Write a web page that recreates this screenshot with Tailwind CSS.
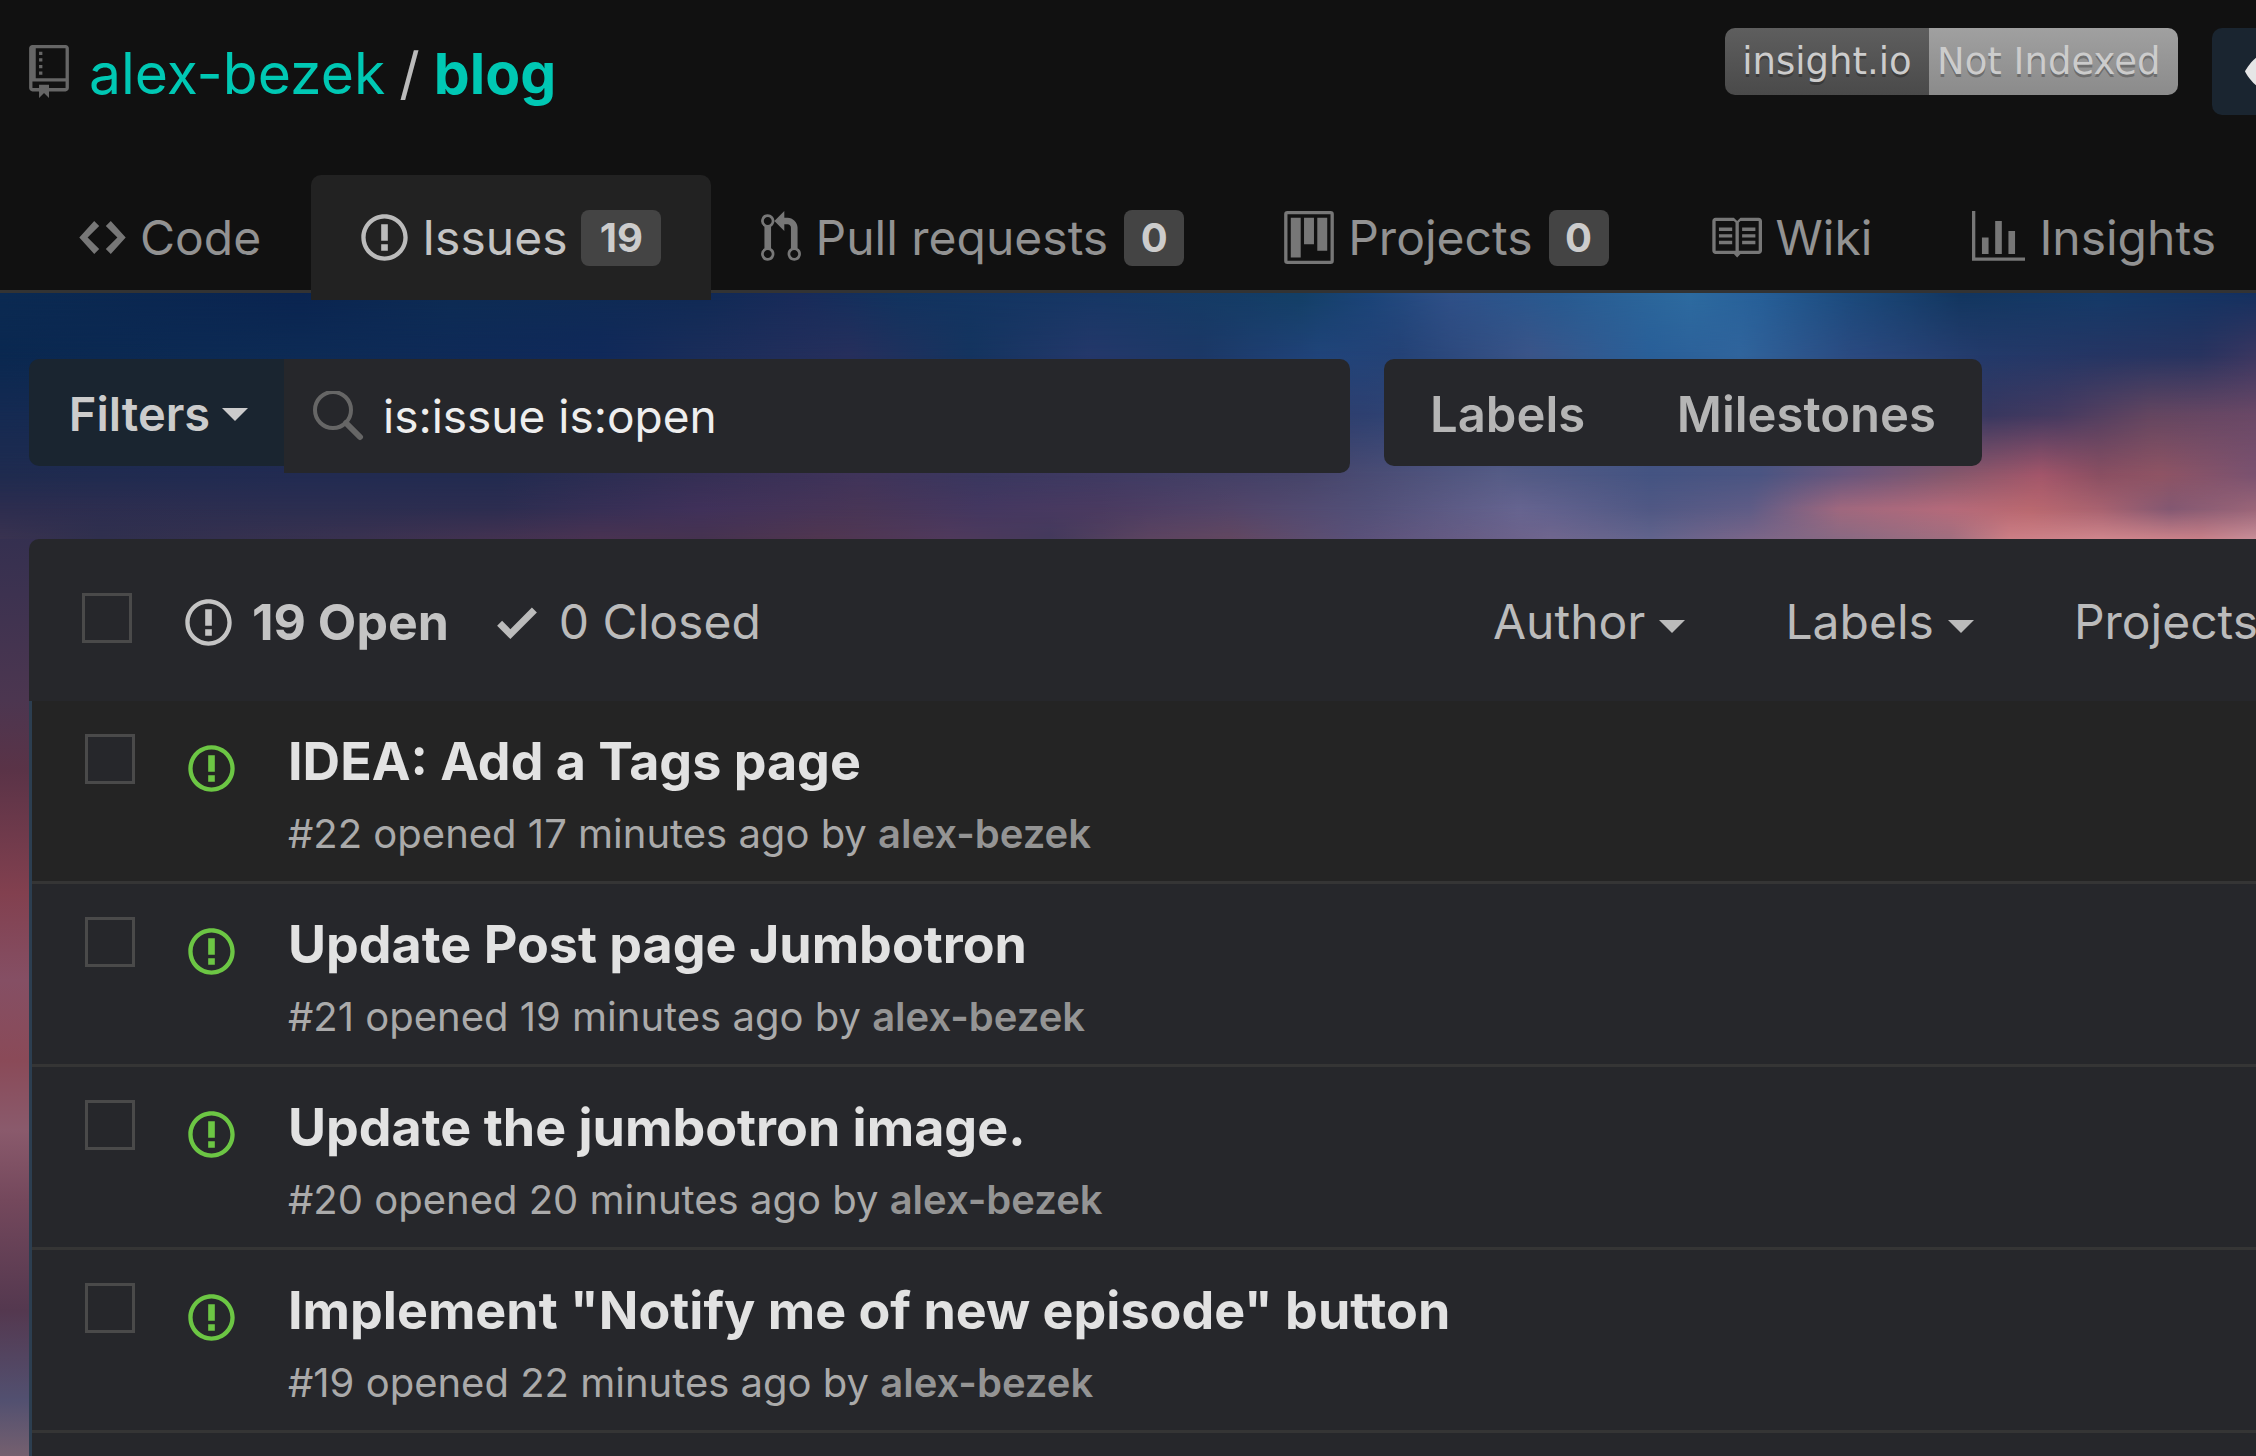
<!DOCTYPE html>
<html lang="en">
<head>
<meta charset="utf-8">
<meta name="viewport" content="width=device-width, initial-scale=1">
<title>Issues · alex-bezek/blog</title>
<script src="https://cdn.jsdelivr.net/npm/@tailwindcss/browser@4"></script>
</head>
<body class="min-h-screen overflow-x-hidden bg-[#111] font-['Inter',sans-serif] text-[#bbb]">

<!-- icon sprite -->
<svg class="hidden" aria-hidden="true">
  <symbol id="repo" viewBox="0 0 12 16"><path d="M4 9H3V8h1v1zm0-3H3v1h1V6zm0-2H3v1h1V4zm0-2H3v1h1V2zm8-1v12c0 .55-.45 1-1 1H6v2l-1.500-1.500L3 16v-2H1c-.55 0-1-.45-1-1V1c0-.55.45-1 1-1h10c.55 0 1 .45 1 1zm-1 10H1v2h2v-1h3v1h5v-2zm0-10H2v9h9V1z"/></symbol>
  <symbol id="code" viewBox="0 0 14 16"><path d="M9.500 3L8 4.500 11.500 8 8 11.500 9.500 13 14 8 9.500 3zm-5 0L0 8l4.500 5L6 11.500 2.500 8 6 4.500 4.500 3z"/></symbol>
  <symbol id="issue" viewBox="0 0 14 16"><path d="M7 2.3c3.14 0 5.7 2.56 5.7 5.7s-2.56 5.7-5.7 5.7A5.71 5.71 0 0 1 1.3 8c0-3.14 2.56-5.7 5.7-5.7zM7 1C3.14 1 0 4.14 0 8s3.14 7 7 7 7-3.14 7-7-3.14-7-7-7zm1 3H6v5h2V4zm0 6H6v2h2v-2z"/></symbol>
  <symbol id="pull" viewBox="0 0 12 16"><path d="M11 11.28V5c-.03-.78-.34-1.47-.94-2.06C9.46 2.35 8.78 2.03 8 2H7V0L4 3l3 3V4h1c.27.02.48.11.69.31.21.2.3.42.31.69v6.28A1.993 1.993 0 0 0 10 15a1.993 1.993 0 0 0 1-3.72zm-1 2.92c-.66 0-1.2-.55-1.2-1.2 0-.65.55-1.2 1.2-1.2.65 0 1.2.55 1.2 1.2 0 .65-.55 1.2-1.2 1.2zM4 3c0-1.11-.89-2-2-2a1.993 1.993 0 0 0-1 3.72v6.56A1.993 1.993 0 0 0 2 15a1.993 1.993 0 0 0 1-3.72V4.72c.59-.34 1-.98 1-1.72zm-.8 10c0 .66-.55 1.2-1.2 1.2-.65 0-1.2-.55-1.2-1.2 0-.65.55-1.2 1.2-1.2.65 0 1.2.55 1.2 1.2zM2 4.2C1.34 4.2.8 3.65.8 3c0-.65.55-1.2 1.2-1.2.65 0 1.2.55 1.2 1.2 0 .65-.55 1.2-1.2 1.2z"/></symbol>
  <symbol id="project" viewBox="0 0 15 16"><path fill-rule="evenodd" d="M10 12h3V2h-3v10zm-4-2h3V2H6v8zm-4 4h3V2H2v12zm-1 1h13V1H1v14zM14 0H1a1 1 0 0 0-1 1v14a1 1 0 0 0 1 1h13a1 1 0 0 0 1-1V1a1 1 0 0 0-1-1z"/></symbol>
  <symbol id="book" viewBox="0 0 16 16"><path d="M3 5h4v1H3V5zm0 3h4V7H3v1zm0 2h4V9H3v1zm11-5h-4v1h4V5zm0 2h-4v1h4V7zm0 2h-4v1h4V9zm2-6v9c0 .55-.45 1-1 1H9.5l-1 1-1-1H2c-.55 0-1-.45-1-1V3c0-.55.45-1 1-1h5.5l1 1 1-1H15c.55 0 1 .45 1 1zm-8 .5L7.5 3H2v9h6V3.5zm7-.5H9.5l-.5.5V12h6V3z"/></symbol>
  <symbol id="graph" viewBox="0 0 16 16"><path d="M16 14v1H0V0h1v14h15zM5 13H3V8h2v5zm4 0H7V3h2v10zm4 0h-2V6h2v7z"/></symbol>
  <symbol id="check" viewBox="0 0 12 16"><path d="M12 5l-8 8-4-4 1.500-1.500L4 10l6.500-6.500L12 5z"/></symbol>
  <symbol id="eye" viewBox="0 0 16 16"><path d="M8.060 2C3 2 0 8 0 8s3 6 8.060 6C13 14 16 8 16 8s-3-6-7.940-6zM8 12c-2.200 0-4-1.780-4-4 0-2.200 1.800-4 4-4 2.220 0 4 1.800 4 4 0 2.220-1.780 4-4 4zm2-4c0 1.110-.89 2-2 2-1.110 0-2-.89-2-2 0-1.110.89-2 2-2 1.110 0 2 .89 2 2z"/></symbol>
  <symbol id="caret" viewBox="0 0 26 13"><path d="M0 0h26L13 13z"/></symbol>
</svg>

<header class="relative z-10 border-b-[3px] border-[#333] bg-[#111] pt-7">
  <div class="flex h-[87px] items-center pl-[29px]">
    <svg class="mr-5 h-[53px] w-10 fill-[#666]" aria-hidden="true"><use href="#repo"/></svg>
    <h1 class="flex items-center gap-[14px] pt-1 text-[57px] leading-[72px] whitespace-nowrap">
      <a href="#" class="text-[#00c8b4]">alex-bezek</a>
      <span>/</span>
      <a href="#" class="font-bold text-[#00c8b4]">blog</a>
    </h1>
    <a href="#" class="mr-[34px] ml-auto flex h-[67px] self-start overflow-hidden rounded-[10px] font-['DejaVu_Sans',sans-serif] text-[37px] leading-[67px] whitespace-nowrap text-[#ccc] [text-shadow:0_3px_0_rgb(0_0_0/0.25)]">
      <span class="w-[204px] bg-linear-to-b from-[#5e5e5e] to-[#4a4a4a] text-center">insight.io</span>
      <span class="w-[249px] bg-linear-to-b from-[#a0a0a0] to-[#8b8b8b] pl-2">Not Indexed</span>
    </a>
    <button type="button" aria-label="Watch" class="flex h-[87px] w-11 items-center overflow-hidden rounded-l-[10px] bg-[#1a2530] pl-[33px]">
      <svg class="h-[53px] w-[53px] shrink-0 fill-[#e6e6e6]" aria-hidden="true"><use href="#eye"/></svg>
    </button>
  </div>

  <nav aria-label="Repository" class="mt-[60px] -mb-[10px] ml-[29px] flex text-[48px] whitespace-nowrap text-[#929292] *:flex *:h-[125px] *:items-center *:px-[50px]">
    <a href="#"><svg class="mr-[14px] h-[53px] w-[47px] fill-[#777]" aria-hidden="true"><use href="#code"/></svg>Code</a>
    <a href="#" aria-current="page" class="rounded-t-[10px] bg-[#222] text-[#c4c4c4]"><svg class="mr-[14px] h-[53px] w-[47px] fill-[#bbb]" aria-hidden="true"><use href="#issue"/></svg>Issues<span class="ml-[14px] w-20 rounded-lg bg-[#444] text-center text-[40px] leading-[56px] font-bold text-[#ccc]">19</span></a>
    <a href="#"><svg class="mr-[14px] h-[53px] w-10 fill-[#777]" aria-hidden="true"><use href="#pull"/></svg>Pull requests<span class="ml-4 w-[60px] rounded-lg bg-[#444] text-center text-[40px] leading-[56px] font-bold text-[#ccc]">0</span></a>
    <a href="#"><svg class="mr-[14px] h-[53px] w-[50px] fill-[#777]" aria-hidden="true"><use href="#project"/></svg>Projects<span class="ml-4 w-[60px] rounded-lg bg-[#444] text-center text-[40px] leading-[56px] font-bold text-[#ccc]">0</span></a>
    <a href="#"><svg class="mr-[14px] h-[53px] w-[53px] fill-[#777]" aria-hidden="true"><use href="#book"/></svg>Wiki</a>
    <a href="#"><svg class="mr-[14px] h-[53px] w-[53px] fill-[#777]" aria-hidden="true"><use href="#graph"/></svg>Insights</a>
  </nav>
</header>

<main class="relative overflow-hidden bg-[linear-gradient(180deg,#0b2a52_0,#0a2850_62px,#152a52_122px,#242c50_182px,#353050_246px,#4c3650_407px,#5a3347_477px,#82404f_600px,#854f64_687px,#8a4a58_767px,#8a5a6c_837px,#74485c_907px,#54384f_1017px,#525070_1107px,#75606f_1163px)] pt-[66px] pl-[29px]">
  <!-- sunset sky -->
  <svg class="absolute inset-x-0 top-0 h-[246px] w-full" viewBox="0 0 2256 246" preserveAspectRatio="none" aria-hidden="true">
    <defs id="sky"></defs>
    <g id="bands"></g>
  </svg>

  <div class="relative mb-[66px] flex items-start pr-[274px] whitespace-nowrap">
    <button type="button" class="flex h-[107px] w-[255px] items-center justify-center gap-3 rounded-l-[10px] bg-[#1a2530] pt-1 pl-1 text-[47px] font-semibold text-[#ccc]">Filters<svg class="h-[13px] w-[26px] fill-[#ccc]" aria-hidden="true"><use href="#caret"/></svg></button>
    <label class="flex h-[114px] min-w-0 flex-1 items-center rounded-r-[10px] bg-[#26272b] pl-[29px]">
      <svg class="mr-[19px] h-[51px] w-[51px] fill-none stroke-[#666] stroke-[4]" viewBox="0 0 51 51" aria-hidden="true"><circle cx="20" cy="19" r="18"/><path d="M33 32l14 14" stroke-width="6" stroke-linecap="round"/></svg>
      <input type="text" aria-label="Search all issues" value="is:issue is:open" class="min-w-0 flex-1 bg-transparent text-[46px] text-[#eee] outline-none">
    </label>
    <div class="ml-[34px] flex h-[107px] w-[598px] items-center justify-between rounded-[10px] bg-[#26272b] px-[46px] pt-1 text-[49px] font-semibold text-[#b5b5b5]">
      <a href="#">Labels</a>
      <a href="#">Milestones</a>
    </div>
  </div>

  <section aria-label="Issues" class="relative">
    <div class="flex h-[162px] items-center rounded-tl-[10px] bg-[#26272b] pl-[53px] text-[48px] whitespace-nowrap">
      <input type="checkbox" aria-label="Select all" class="mr-[53px] mb-1 size-[50px] appearance-none border-[3px] border-[#4a4a4a]">
      <div class="flex flex-1 items-center pt-1">
        <a href="#" class="flex items-center gap-5 text-[50px] font-bold text-[#c4c4c4]"><svg class="h-[53px] w-[47px] fill-[#c4c4c4]" aria-hidden="true"><use href="#issue"/></svg>19 Open</a>
        <a href="#" class="ml-12 flex items-center gap-[22px]"><svg class="h-[53px] w-10 fill-[#bbb]" aria-hidden="true"><use href="#check"/></svg>0 Closed</a>
      </div>
      <div class="flex w-[763px] shrink-0 gap-[100px] overflow-hidden pt-1">
        <button type="button" class="flex shrink-0 items-center gap-[14px]">Author<svg class="mt-2 h-[13px] w-[26px] fill-[#bbb]" aria-hidden="true"><use href="#caret"/></svg></button>
        <button type="button" class="flex shrink-0 items-center gap-[14px]">Labels<svg class="mt-2 h-[13px] w-[26px] fill-[#bbb]" aria-hidden="true"><use href="#caret"/></svg></button>
        <button type="button" class="flex shrink-0 items-center gap-[14px]">Projects<svg class="mt-2 h-[13px] w-[26px] fill-[#bbb]" aria-hidden="true"><use href="#caret"/></svg></button>
      </div>
    </div>

    <ul class="border-l-[3px] border-[#2c3e50] *:flex *:h-[183px] *:items-start *:border-b-[3px] *:border-[#353535] *:bg-[#26272b] *:pl-[53px] *:whitespace-nowrap">
      <li class="bg-[#242424]!">
        <input type="checkbox" aria-label="Select issue 22" class="mt-[33px] mr-[53px] size-[50px] appearance-none border-[3px] border-[#4a4a4a] bg-[#26272b]">
        <svg class="mt-[41px] mr-[53px] h-[53px] w-[47px] fill-[#6cc644]" aria-hidden="true"><use href="#issue"/></svg>
        <div class="pt-7">
          <a href="#" class="block text-[52px] leading-[66px] font-bold text-[#e2e2e2]">IDEA: Add a Tags page</a>
          <p class="mt-3 text-[40px] leading-[54px] text-[#aaa]">#22 opened 17 minutes ago by <a href="#" class="font-semibold text-[#949494]">alex-bezek</a></p>
        </div>
      </li>
      <li>
        <input type="checkbox" aria-label="Select issue 21" class="mt-[33px] mr-[53px] size-[50px] appearance-none border-[3px] border-[#4a4a4a]">
        <svg class="mt-[41px] mr-[53px] h-[53px] w-[47px] fill-[#6cc644]" aria-hidden="true"><use href="#issue"/></svg>
        <div class="pt-7">
          <a href="#" class="block text-[52px] leading-[66px] font-bold text-[#e2e2e2]">Update Post page Jumbotron</a>
          <p class="mt-3 text-[40px] leading-[54px] text-[#aaa]">#21 opened 19 minutes ago by <a href="#" class="font-semibold text-[#949494]">alex-bezek</a></p>
        </div>
      </li>
      <li>
        <input type="checkbox" aria-label="Select issue 20" class="mt-[33px] mr-[53px] size-[50px] appearance-none border-[3px] border-[#4a4a4a]">
        <svg class="mt-[41px] mr-[53px] h-[53px] w-[47px] fill-[#6cc644]" aria-hidden="true"><use href="#issue"/></svg>
        <div class="pt-7">
          <a href="#" class="block text-[52px] leading-[66px] font-bold text-[#e2e2e2]">Update the jumbotron image.</a>
          <p class="mt-3 text-[40px] leading-[54px] text-[#aaa]">#20 opened 20 minutes ago by <a href="#" class="font-semibold text-[#949494]">alex-bezek</a></p>
        </div>
      </li>
      <li>
        <input type="checkbox" aria-label="Select issue 19" class="mt-[33px] mr-[53px] size-[50px] appearance-none border-[3px] border-[#4a4a4a]">
        <svg class="mt-[41px] mr-[53px] h-[53px] w-[47px] fill-[#6cc644]" aria-hidden="true"><use href="#issue"/></svg>
        <div class="pt-7">
          <a href="#" class="block text-[52px] leading-[66px] font-bold text-[#e2e2e2]">Implement "Notify me of new episode" button</a>
          <p class="mt-3 text-[40px] leading-[54px] text-[#aaa]">#19 opened 22 minutes ago by <a href="#" class="font-semibold text-[#949494]">alex-bezek</a></p>
        </div>
      </li>
      <li class="h-[23px]! border-b-0!"></li>
    </ul>
  </section>
</main>

<script>
  // Sky colours along six horizontal lines, cross-faded from one line to the next.
  const lines = [
    [0, "0 0b2a52,300 0a2450,450 0d2c54,700 102a55,800 182b5a,900 11335f,1100 163765,1300 133f66,1370 1b4478,1450 2f5088,1560 275a90,1690 2d6ba0,1760 265f98,1850 1b4a7c,1960 12365f,2100 143a68,2256 14305f"],
    [62, "0 0a2850,300 0d2b55,600 10295a,700 1a2d5a,850 262f5c,970 14345f,1090 24386a,1200 1c3866,1320 20447a,1400 244276,1530 3a5488,1650 295f98,1740 30649c,1850 2a4a80,1980 233a6a,2100 253563,2200 28335f,2256 3a3660"],
    [122, "0 152a52,500 1a2a54,900 2a325c,1365 2e4070,1600 3a5488,1850 44507c,1990 38375f,2060 463a60,2150 644660,2256 6a4866"],
    [182, "0 1f2b4f,300 222b52,500 222b50,700 352f55,860 40345a,980 3a375f,1100 3f3a62,1300 464469,1370 4a4c74,1500 565c86,1650 455482,1760 4b5582,1850 6a567c,1950 85586c,2040 a3566a,2100 8a4f62,2160 8f5464,2256 7a5270"],
    [216, "0 2d2d4f,300 2c2e50,500 2d2d50,700 40315a,860 483556,980 443760,1100 4a3a60,1230 524468,1370 525078,1520 666490,1650 505884,1750 5f5c86,1840 a0687e,1950 b56a7a,2030 b9686f,2100 a86270,2170 835872,2256 9a6578"],
    [246, "0 3a3350,100 30304e,350 3a3250,600 4a3352,700 463350,820 503650,950 503a5c,1050 443a5c,1150 5c4460,1230 624760,1350 5a5078,1550 70668e,1650 62648c,1750 7a6588,1850 8a6a82,1950 a06f80,2010 cc7f86,2100 cf868c,2200 c88088,2256 c88e98"]
  ];
  let defs = "", bands = "";
  lines.forEach(([y, stops], i) => {
    defs += `<linearGradient id="c${i}">` + stops.split(",").map(s => {
      const [x, c] = s.split(" ");
      return `<stop offset="${x / 2256}" stop-color="#${c}"/>`;
    }).join("") + "</linearGradient>";
    if (i) {
      defs += `<linearGradient id="f${i}" gradientUnits="userSpaceOnUse" x1="0" x2="0" y1="${lines[i - 1][0]}" y2="${y}"><stop offset="0" stop-color="#fff" stop-opacity="0"/><stop offset="1" stop-color="#fff"/></linearGradient><mask id="m${i}" style="mask-type:alpha"><rect width="2256" height="246" fill="url(#f${i})"/></mask>`;
    }
    bands += `<rect width="2256" height="246" fill="url(#c${i})"${i ? ` mask="url(#m${i})"` : ""}/>`;
  });
  document.getElementById("sky").innerHTML = defs;
  document.getElementById("bands").innerHTML = bands;
</script>
</body>
</html>
